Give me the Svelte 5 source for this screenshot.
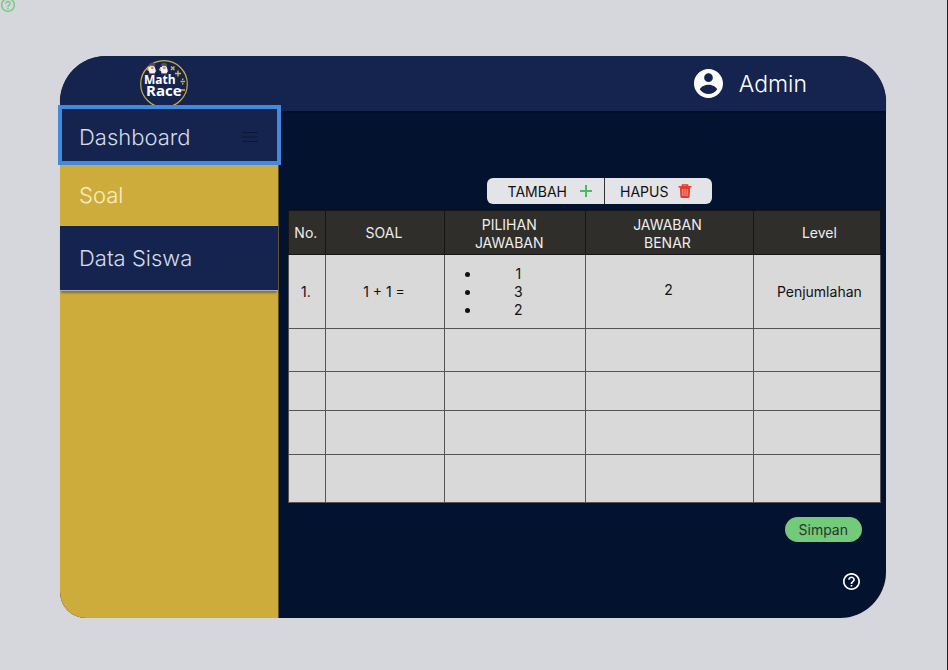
<script>
  const rows = [
    { no: '1.', soal: '1 + 1 =', pilihan: ['1', '3', '2'], benar: '2', level: 'Penjumlahan', height: 74 },
    { height: 43 },
    { height: 39 },
    { height: 44 },
    { height: 48 }
  ];
</script>

{#snippet helpIcon()}
  <svg viewBox="2 2 20 20" fill="currentColor" aria-hidden="true">
    <path d="M11 18h2v-2h-2v2zm1-16C6.480 2 2 6.480 2 12s4.480 10 10 10 10-4.480 10-10S17.520 2 12 2zm0 18c-4.410 0-8-3.590-8-8s3.590-8 8-8 8 3.590 8 8-3.590 8-8 8zm0-14c-2.210 0-4 1.790-4 4h2c0-1.100.9-2 2-2s2 .9 2 2c0 2-3 1.750-3 5h2c0-2.250 3-2.500 3-5 0-2.210-1.790-4-4-4z" />
  </svg>
{/snippet}

{#snippet racer()}
  <path d="M1.500 4.500L0 7.500l2 1 .5 2.500h5L9 8.500 7.500 4z" fill="#f4f4f4" />
  <path d="M1.500 3.500L2.500 1l3-1 2.500 1.500.3 3-1.300-1.500-4 .3z" fill="#4d4d5c" />
  <path d="M3 3.300h4v2.400H3z" fill="#e9d9d4" />
  <path d="M4.200 4.800h2.200v1.500H4.200z" fill="#d6593f" />
  <path d="M0 7.300l1.200-1.500.8 1.500zM8.200 7l1.300.8-1 1z" fill="#dc7650" />
  <path d="M2.700 10.700h1.800v1H2zM5.700 10.700h1.600l.9 1H5.700z" fill="#d6493f" />
{/snippet}

<div class="page">
  <a class="corner-help" href="#bantuan" aria-label="Bantuan">{@render helpIcon()}</a>

  <div class="card">
    <header>
      <svg class="logo" viewBox="0 0 50 50" role="img" aria-label="Math Race">
        <circle cx="25" cy="25" r="23.300" fill="#14244f" stroke="#cfae3e" stroke-width="1.200" />
        <g transform="translate(8 3.500)">{@render racer()}</g>
        <g transform="translate(20 3.500)">{@render racer()}</g>
        <g stroke="#d9b73a" stroke-width="1.400" fill="none">
          <path d="M32 7.500l3.500 3.500M35.500 7.500l-3.500 3.500M36 14.500h6M39 11.500v6M41.500 22.500h4.500M41 31h5" />
          <path d="M43.700 19.500v1.500M43.700 24v1.500" />
        </g>
        <text class="logo-name"><tspan x="5" y="25">Math</tspan> <tspan x="7" y="37" class="logo-race">Race</tspan></text>
      </svg>

      <a class="account" href="#admin">
        <svg viewBox="2 2 20 20" aria-hidden="true">
          <path fill="#fff" fill-rule="evenodd" d="M12 2C6.480 2 2 6.480 2 12s4.480 10 10 10 10-4.480 10-10S17.520 2 12 2zM12 5a3 3 0 110 6 3 3 0 010-6zM6 16c.8-2.100 3.800-3.200 6-3.200s5.200 1.100 6 3.200c-1.300 2.100-3.500 3.300-6 3.300S7.300 18.100 6 16z" />
        </svg>
        <span>Admin</span>
      </a>
    </header>

    <div class="body">
      <nav>
        <a class="dashboard" href="#dashboard">
          Dashboard
          <svg viewBox="0 0 16 12" aria-hidden="true">
            <path d="M0 1.500h16M0 6h16M0 10.500h16" stroke="#0a1637" stroke-width="1.200" />
          </svg>
        </a>
        <a class="soal" href="#soal">Soal</a>
        <a class="siswa" href="#data-siswa">Data Siswa</a>
      </nav>

      <main>
        <div class="actions">
          <button type="button" class="add">
            TAMBAH
            <svg viewBox="0 0 14 14" aria-hidden="true"><path d="M7 1v12M1 7h12" stroke="#4fb866" stroke-width="2" /></svg>
          </button>
          <button type="button" class="remove">
            HAPUS
            <svg viewBox="0 0 14 14" aria-hidden="true">
              <path d="M.5 2.800h13M4.500 2.500V1h5v1.500" fill="none" stroke="#e93a2c" stroke-width="1.600" />
              <path d="M1.800 3h10.400l-.6 9.500a1.500 1.500 0 01-1.500 1.500H3.900a1.500 1.500 0 01-1.500-1.500z" fill="#e93a2c" />
              <path d="M4.700 5l.2 7M7 5v7M9.300 5l-.2 7" stroke="#f0d3d0" stroke-width=".7" />
            </svg>
          </button>
        </div>

        <table>
          <colgroup>
            <col class="c-no" /><col class="c-soal" /><col class="c-pilihan" /><col class="c-benar" /><col class="c-level" />
          </colgroup>
          <thead>
            <tr>
              <th scope="col">No.</th>
              <th scope="col">SOAL</th>
              <th scope="col">PILIHAN<br />JAWABAN</th>
              <th scope="col">JAWABAN<br />BENAR</th>
              <th scope="col">Level</th>
            </tr>
          </thead>
          <tbody>
            {#each rows as row}
              <tr style="height: {row.height}px">
                <td>{row.no ?? ''}</td>
                <td>{row.soal ?? ''}</td>
                <td>
                  {#if row.pilihan}
                    <ul>
                      {#each row.pilihan as p}<li>{p}</li>{/each}
                    </ul>
                  {/if}
                </td>
                <td>{row.benar ?? ''}</td>
                <td>{row.level ?? ''}</td>
              </tr>
            {/each}
          </tbody>
        </table>

        <button type="button" class="save">Simpan</button>
        <a class="help" href="#bantuan" aria-label="Bantuan">{@render helpIcon()}</a>
      </main>
    </div>
  </div>
</div>

<style>
  :global(body) {
    background: #d5d7dc;
  }
  .page {
    box-sizing: border-box;
    position: relative;
    display: flex;
    min-height: 100vh;
    padding: 56px 61px 52px 60px;
    border-right: 1px solid #202124;
    font-family: Inter, 'Liberation Sans', sans-serif;
    overflow: hidden;
  }
  a {
    color: inherit;
    text-decoration: none;
  }
  svg {
    display: block;
    flex: none;
  }
  .corner-help {
    position: absolute;
    top: -2px;
    left: 1px;
    width: 14px;
    color: #74c97f;
  }
  .card {
    display: flex;
    flex: 1;
    flex-direction: column;
    border-radius: 46px 46px 46px 26px;
    background: #03122e;
  }
  header {
    display: flex;
    align-items: center;
    justify-content: space-between;
    height: 55px;
    padding: 0 79px;
    border-radius: 46px 46px 0 0;
    background: #14244f;
    box-shadow: 0 2px 2px -1px #010818;
  }
  .logo {
    width: 50px;
    height: 50px;
  }
  .logo-name {
    fill: #fff;
    font-family: 'Open Sans', 'Noto Sans', sans-serif;
    font-size: 12px;
    font-weight: 700;
  }
  .logo-race {
    font-size: 15px;
  }
  .account {
    display: flex;
    align-items: center;
    gap: 16px;
    color: #fff;
    font-size: 23px;
    font-weight: 300;
  }
  .account svg {
    width: 29px;
    height: 29px;
  }
  .body {
    display: flex;
    flex: 1;
  }
  nav {
    display: flex;
    flex-direction: column;
    flex: none;
    width: 218px;
    border-right: 1px solid #5c5330;
    border-radius: 0 0 0 26px;
    background: #ceac3c;
    color: #d5dae5;
    font-size: 22px;
    font-weight: 300;
  }
  nav a {
    box-sizing: border-box;
    display: flex;
    align-items: center;
    justify-content: space-between;
    padding: 0 20px 0 19px;
    height: 62px;
  }
  nav .dashboard {
    position: relative;
    height: 52px;
    background: #14244f;
  }
  .dashboard::after {
    position: absolute;
    inset: -6px -3px -2px -2px;
    border: 4px solid #418ae0;
    content: '';
  }
  .dashboard svg {
    width: 16px;
    height: 12px;
  }
  nav .soal {
    padding-top: 2px;
    color: #f7edc4;
  }
  nav .siswa {
    height: 66px;
    border-top: 1px solid #a9adb5;
    border-bottom: 1px solid #a9adb5;
    background: #14244f;
    box-shadow: 0 3px 2px -1px #82713a;
  }
  main {
    display: flex;
    flex: 1;
    flex-direction: column;
    min-width: 0;
    padding: 67px 5px 28px 9px;
  }
  button {
    border: 0;
    color: #111;
    font: inherit;
    cursor: pointer;
  }
  .actions {
    display: flex;
    align-self: center;
    margin: 0 0 6px 30px;
    border-radius: 6px;
    background: #e2e4e8;
    font-size: 14px;
    overflow: hidden;
  }
  .actions button {
    display: flex;
    align-items: center;
    height: 26px;
    background: none;
  }
  .actions svg {
    width: 14px;
    height: 14px;
  }
  .add {
    gap: 12px;
    padding: 0 11px 0 21px;
  }
  .remove {
    gap: 10px;
    padding: 0 20px 0 15px;
    border-left: 1px solid #333;
  }
  table {
    width: 100%;
    border: 1px solid #151515;
    border-collapse: collapse;
    table-layout: fixed;
    background: #d9d9d9;
    color: #111;
    font-size: 14px;
    line-height: 18px;
    text-align: center;
  }
  .c-no { width: 6.2%; }
  .c-soal { width: 20.2%; }
  .c-pilihan { width: 23.8%; }
  .c-benar { width: 28.3%; }
  .c-level { width: 21.5%; }
  thead tr {
    height: 44px;
    background: #302e2a;
    color: #eee;
  }
  th,
  td {
    padding: 0 2px 0 0;
    border: 1px solid #555;
    vertical-align: middle;
  }
  th {
    border-color: #151515;
    font-weight: 400;
  }
  th:nth-child(3) {
    padding: 2px 12px 0 0;
  }
  th:nth-child(4) {
    padding: 2px 4px 0 0;
  }
  td:nth-child(4) {
    padding-bottom: 4px;
  }
  th:last-child,
  td:last-child {
    padding: 0 0 0 5px;
  }
  ul {
    margin: 0;
    padding: 0 28px 0 36px;
  }
  .save {
    align-self: flex-end;
    height: 25px;
    margin: 14px 19px 0 0;
    padding: 0 14px;
    border-radius: 13px;
    background: #74ca7b;
    color: #29372c;
    font-size: 14px;
  }
  .help {
    align-self: flex-end;
    width: 17px;
    margin: auto 21px 0 0;
    color: #fff;
  }
</style>
